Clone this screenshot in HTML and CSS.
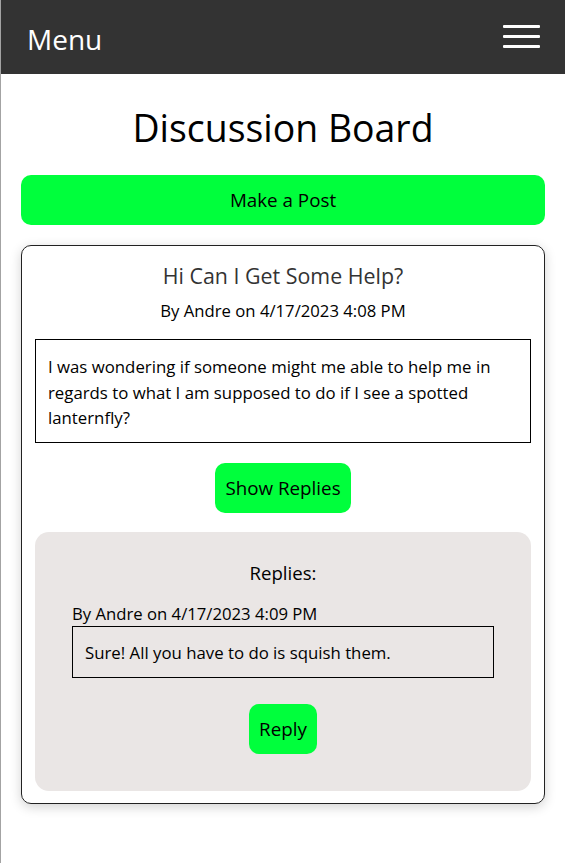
FILE: index.html
```html
<!DOCTYPE html>
<html lang="en">
<head>
<meta charset="utf-8">
<title>Discussion Board</title>
<link rel="stylesheet" href="styles.css">
</head>
<body>
<div class="page">
  <header class="topbar">
    <span class="brand">Menu</span>
    <button class="burger" aria-label="Open menu">
      <span class="bar"></span><span class="bar"></span><span class="bar"></span>
    </button>
  </header>
  <main class="content">
    <h1 class="page-title">Discussion Board</h1>
    <button class="btn btn-wide">Make a Post</button>
    <article class="post">
      <h2 class="post-title">Hi Can I Get Some Help?</h2>
      <p class="post-meta">By Andre on 4/17/2023 4:08 PM</p>
      <div class="post-body">I was wondering if someone might me able to help me in regards to what I am supposed to do if I see a spotted lanternfly?</div>
      <div class="center">
        <button class="btn">Show Replies</button>
      </div>
      <section class="replies">
        <h3 class="replies-title">Replies:</h3>
        <div class="reply">
          <p class="reply-meta">By Andre on 4/17/2023 4:09 PM</p>
          <div class="reply-body">Sure! All you have to do is squish them.</div>
        </div>
        <div class="center">
          <button class="btn">Reply</button>
        </div>
      </section>
    </article>
  </main>
</div>
</body>
</html>
```
FILE: styles.css
```css
* { box-sizing: border-box; }
html, body { margin: 0; padding: 0; background: #fff; }
body {
  font-family: "Open Sans", "Noto Sans", sans-serif;
  color: #000;
}
.page {
  border-left: 1px solid #a3a3a3;
  min-height: 863px;
}
.topbar {
  height: 74px;
  background: #333333;
  display: flex;
  align-items: center;
  justify-content: space-between;
  padding: 0 25px 0 26px;
}
.brand {
  color: #fff;
  font-size: 28px;
  line-height: 1;
  margin-top: 3px;
}
.burger {
  background: none;
  border: 0;
  padding: 0;
  display: flex;
  flex-direction: column;
  gap: 7px;
  width: 37px;
  margin-top: -1px;
}
.bar {
  display: block;
  height: 3px;
  width: 37px;
  background: #fff;
  border-radius: 1px;
}
.content {
  padding: 0 20px 0 20px;
}
.page-title {
  margin: 28px 0 21px;
  text-align: center;
  font-weight: 400;
  font-size: 37.4px;
  line-height: 52px;
}
.btn {
  font-family: inherit;
  font-size: 18.8px;
  color: #000;
  background: #00ff3c;
  border: 0;
  border-radius: 10px;
  height: 50px;
  padding: 0 10px;
}
.btn-wide {
  display: block;
  width: 100%;
}
.post {
  margin-top: 20px;
  border: 1px solid #222;
  border-radius: 10px;
  box-shadow: 0 3px 12px rgba(0,0,0,0.18);
  padding: 13px 13px 12px;
}
.post-title {
  margin: 0;
  text-align: center;
  font-weight: 400;
  font-size: 21.4px;
  line-height: 34px;
  color: #333;
}
.post-meta {
  margin: 6px 0 16px;
  text-align: center;
  font-size: 16.7px;
  line-height: 24px;
}
.post-body {
  border: 1px solid #000;
  padding: 14px 12px 11px;
  font-size: 16.8px;
  line-height: 25.5px;
}
.center {
  display: flex;
  justify-content: center;
}
.post-body + .center { margin: 20px 0 19px; }
.replies {
  background: #eae6e5;
  border-radius: 14px;
  padding: 26px 37px 37px;
}
.replies-title {
  margin: 0 0 14px;
  text-align: center;
  font-weight: 400;
  font-size: 18.6px;
  line-height: 30px;
}
.reply-meta {
  margin: 0;
  font-size: 16.7px;
  line-height: 24px;
}
.reply-body {
  border: 1px solid #000;
  padding: 13px 12px 11px;
  font-size: 16.8px;
  line-height: 26px;
}
.reply + .center { margin-top: 26px; }
```
